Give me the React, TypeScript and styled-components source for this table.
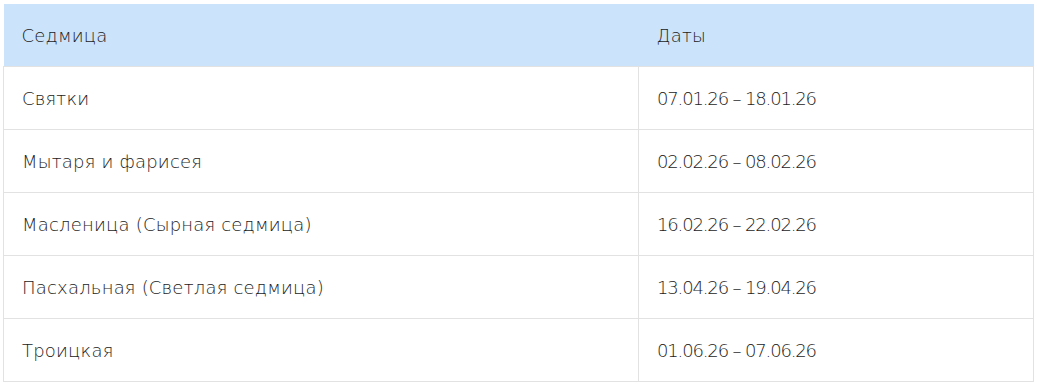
import styled, { createGlobalStyle } from 'styled-components';

interface Week {
  name: string;
  dates: string;
}

const weeks: Week[] = [
  { name: 'Святки', dates: '07.01.26 – 18.01.26' },
  { name: 'Мытаря и фарисея', dates: '02.02.26 – 08.02.26' },
  { name: 'Масленица (Сырная седмица)', dates: '16.02.26 – 22.02.26' },
  { name: 'Пасхальная (Светлая седмица)', dates: '13.04.26 – 19.04.26' },
  { name: 'Троицкая', dates: '01.06.26 – 07.06.26' },
];

const GlobalStyle = createGlobalStyle`
  body {
    margin: 0;
    background: #ffffff;
    font-family: 'DejaVu Sans', 'Noto Sans', sans-serif;
  }
`;

const Wrapper = styled.div`
  padding: 4px 3px 0 3px;
`;

const Table = styled.table`
  width: 1031px;
  border-collapse: collapse;
  table-layout: fixed;
`;

const HeadRow = styled.tr`
  background: #cce4fb;
`;

const HeadCell = styled.th<{ $w?: number }>`
  width: ${(p) => (p.$w ? `${p.$w}px` : 'auto')};
  height: 62px;
  padding: 0 18px;
  text-align: left;
  font-weight: 200;
  font-size: 18px;
  letter-spacing: 0.2px;
  color: #1c1c1c;
`;

const Cell = styled.td<{ $dates?: boolean }>`
  height: 62px;
  padding: 0 18px;
  border: 1px solid #e2e2e2;
  font-weight: 200;
  font-size: 18px;
  letter-spacing: ${(p) => (p.$dates ? '-1.15px' : '0.2px')};
  color: #1c1c1c;
`;

const App = () => {
  return (
    <>
      <GlobalStyle />
      <Wrapper>
        <Table>
          <thead>
            <HeadRow>
              <HeadCell $w={599}>Седмица</HeadCell>
              <HeadCell>Даты</HeadCell>
            </HeadRow>
          </thead>
          <tbody>
            {weeks.map((w) => (
              <tr key={w.name}>
                <Cell>{w.name}</Cell>
                <Cell $dates>{w.dates}</Cell>
              </tr>
            ))}
          </tbody>
        </Table>
      </Wrapper>
    </>
  );
};

export default App;
